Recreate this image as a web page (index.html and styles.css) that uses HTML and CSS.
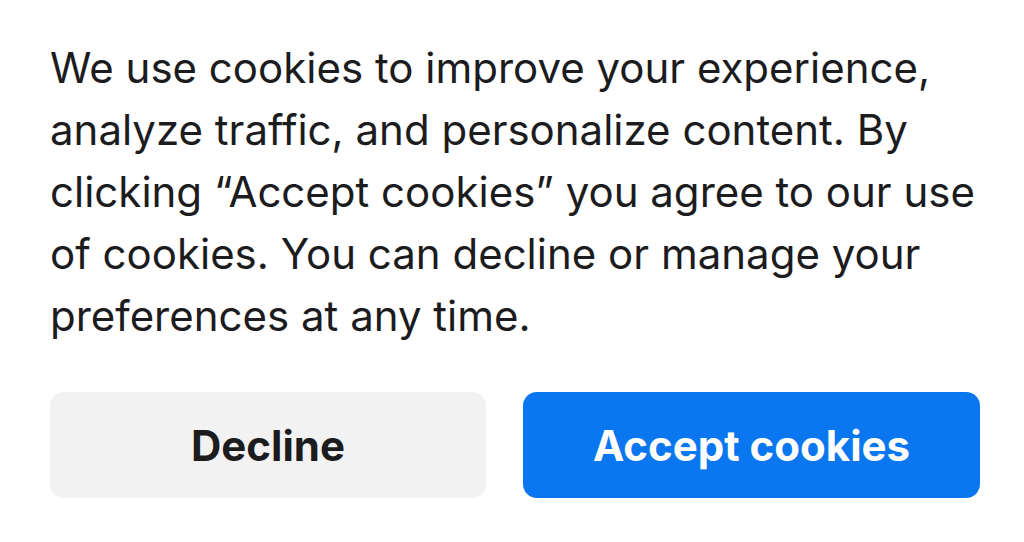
FILE: index.html
```html
<!DOCTYPE html>
<html lang="en">
<head>
<meta charset="utf-8">
<link rel="stylesheet" href="styles.css">
</head>
<body>
<div class="banner">
  <p class="message">We use cookies to improve your experience, analyze traffic, and personalize content. By clicking “Accept cookies” you agree to our use of cookies. You can decline or manage your preferences at any time.</p>
  <div class="actions">
    <button class="btn btn-decline">Decline</button>
    <button class="btn btn-accept">Accept cookies</button>
  </div>
</div>
</body>
</html>
```
FILE: styles.css
```css
html, body {
  margin: 0;
  padding: 0;
  background: #ffffff;
}
.banner {
  padding: 37px 44px 0 50px;
  font-family: Inter, "Noto Sans", sans-serif;
  color: #1c1c1e;
}
.message {
  margin: 0;
  font-size: 42px;
  line-height: 62px;
}
.actions {
  display: grid;
  grid-template-columns: 436px 457px;
  column-gap: 37px;
  margin-top: 45px;
}
.btn {
  height: 106px;
  border: none;
  border-radius: 14px;
  font-family: Inter, "Noto Sans", sans-serif;
  font-size: 42px;
  font-weight: 700;
  cursor: pointer;
}
.btn-decline {
  background: #f2f2f2;
  color: #1c1c1e;
}
.btn-accept {
  background: #0a76f0;
  color: #ffffff;
}
```
